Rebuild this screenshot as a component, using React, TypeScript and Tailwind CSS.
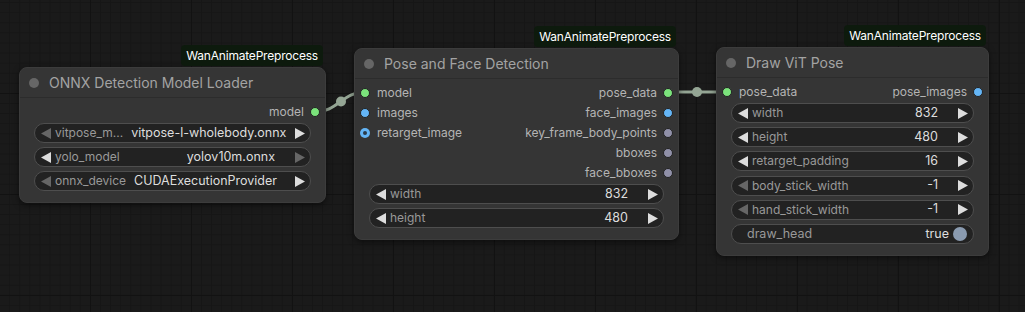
import React from 'react'

type Slot = { label: string; color: string; ring?: boolean }
type Widget =
  | { kind: 'combo'; label: string; value: string; left?: boolean; right?: boolean }
  | { kind: 'toggle'; label: string; value: string }

type NodeProps = {
  x: number
  y: number
  w: number
  title: string
  inputs: Slot[]
  outputs: Slot[]
  widgets: Widget[]
}

const GREEN = '#7be37b'
const BLUE = '#64b5f6'
const GRAY = '#9090a8'

function Dot({ slot }: { slot: Slot }) {
  if (slot.ring) {
    return (
      <span
        className="w-[10px] h-[10px] rounded-full shrink-0 flex items-center justify-center"
        style={{ backgroundColor: slot.color }}
      >
        <span className="w-[4px] h-[4px] rounded-full bg-[#2a3a4a]" />
      </span>
    )
  }
  return (
    <span
      className="w-[10px] h-[10px] rounded-full shrink-0 border border-[#222]"
      style={{ backgroundColor: slot.color }}
    />
  )
}

function Arrow({ dir, on }: { dir: 'l' | 'r'; on: boolean }) {
  return (
    <svg width="10" height="11" viewBox="0 0 10 11" className="shrink-0">
      <path d={dir === 'l' ? 'M10 0 L0 5.5 L10 11 Z' : 'M0 0 L10 5.5 L0 11 Z'} fill={on ? '#dddddd' : '#666666'} />
    </svg>
  )
}

function WidgetRow({ widget }: { widget: Widget }) {
  if (widget.kind === 'toggle') {
    return (
      <div className="h-5 rounded-full bg-[#222] border border-[#4e4e4e] flex items-center pl-[15px] pr-[6px] text-[12.5px]">
        <span className="text-[#999]">{widget.label}</span>
        <span className="ml-auto text-[#ddd] mr-[4px]">{widget.value}</span>
        <span className="w-[14px] h-[14px] rounded-full bg-[#8a9bb0]" />
      </div>
    )
  }
  return (
    <div className="h-5 rounded-full bg-[#222] border border-[#4e4e4e] flex items-center pl-[6px] pr-[5px] text-[12.5px]">
      <Arrow dir="l" on={widget.left !== false} />
      <span className="text-[#999] text-[12px] ml-[4px] whitespace-nowrap">{widget.label}</span>
      <span className="ml-auto text-[#ddd] whitespace-nowrap pl-2">{widget.value}</span>
      <span className="w-[20px]" />
      <Arrow dir="r" on={widget.right !== false} />
    </div>
  )
}

function Node({ x, y, w, title, inputs, outputs, widgets }: NodeProps) {
  const rows = Math.max(inputs.length, outputs.length)
  return (
    <div className="absolute" style={{ left: x, top: y, width: w }}>
      <div className="absolute right-[3px] -top-[22px] h-[21px] px-[5px] rounded-[4px] bg-[#0d1a0d] text-white text-[12px] leading-[21px] tracking-[-0.2px]">
        WanAnimatePreprocess
      </div>
      <div className="rounded-[8px] bg-[#353535] border border-[#3c3c3c] shadow-[0_2px_6px_rgba(0,0,0,0.5)] pb-[11px]">
        <div className="h-[30px] flex items-center border-b border-[#2c2c2c]">
          <span className="ml-[9px] w-[10px] h-[10px] rounded-full bg-[#666]" />
          <span className="ml-[10px] text-[14px] text-[#a3a3a3]">{title}</span>
        </div>
        <div className="pt-[4px]">
          {Array.from({ length: rows }).map((_, i) => (
            <div key={i} className="h-5 flex items-center justify-between px-[5px] text-[12px] text-[#b4b4b4]">
              <div className="flex items-center gap-[7px]">
                {inputs[i] && (
                  <>
                    <Dot slot={inputs[i]} />
                    <span>{inputs[i].label}</span>
                  </>
                )}
              </div>
              <div className="flex items-center gap-[6px]">
                {outputs[i] && (
                  <>
                    <span>{outputs[i].label}</span>
                    <Dot slot={outputs[i]} />
                  </>
                )}
              </div>
            </div>
          ))}
        </div>
        <div className="flex flex-col gap-[4.2px] mx-[14px] mt-[1px]">
          {widgets.map((wd, i) => (
            <WidgetRow key={i} widget={wd} />
          ))}
        </div>
      </div>
    </div>
  )
}

export default function App() {
  return (
    <div
      className="relative w-[1025px] h-[312px] overflow-hidden bg-[#1a1a1a] bg-[image:linear-gradient(to_right,#121212_1px,transparent_1px),linear-gradient(to_bottom,#121212_1px,transparent_1px),linear-gradient(to_right,#161616_1px,transparent_1px),linear-gradient(to_bottom,#161616_1px,transparent_1px)] bg-[size:101px_101px,101px_101px,10.1px_10.1px,10.1px_10.1px] bg-[position:-11px_-8px]"
      style={{ fontFamily: 'Inter, "Noto Sans", sans-serif' }}
    >
      <svg className="absolute inset-0" width="1025" height="312">
        <path d="M316 112 C 336 112, 344 92, 364 92" stroke="#94a594" strokeWidth="3" fill="none" />
        <circle cx="341" cy="101.5" r="5" fill="#94a594" />
        <path d="M669 92 L 726 92" stroke="#94a594" strokeWidth="3" fill="none" />
        <circle cx="697" cy="92" r="5" fill="#94a594" />
      </svg>

      <Node
        x={19}
        y={67}
        w={307}
        title="ONNX Detection Model Loader"
        inputs={[]}
        outputs={[{ label: 'model', color: GREEN }]}
        widgets={[
          { kind: 'combo', label: 'vitpose_m...', value: 'vitpose-l-wholebody.onnx', left: false },
          { kind: 'combo', label: 'yolo_model', value: 'yolov10m.onnx', right: false },
          { kind: 'combo', label: 'onnx_device', value: 'CUDAExecutionProvider', left: false },
        ]}
      />

      <Node
        x={354}
        y={48}
        w={325}
        title="Pose and Face Detection"
        inputs={[
          { label: 'model', color: GREEN },
          { label: 'images', color: BLUE },
          { label: 'retarget_image', color: BLUE, ring: true },
        ]}
        outputs={[
          { label: 'pose_data', color: GREEN },
          { label: 'face_images', color: BLUE },
          { label: 'key_frame_body_points', color: GRAY },
          { label: 'bboxes', color: GRAY },
          { label: 'face_bboxes', color: GRAY },
        ]}
        widgets={[
          { kind: 'combo', label: 'width', value: '832' },
          { kind: 'combo', label: 'height', value: '480' },
        ]}
      />

      <Node
        x={716}
        y={47}
        w={273}
        title="Draw ViT Pose"
        inputs={[{ label: 'pose_data', color: GREEN }]}
        outputs={[{ label: 'pose_images', color: BLUE }]}
        widgets={[
          { kind: 'combo', label: 'width', value: '832' },
          { kind: 'combo', label: 'height', value: '480' },
          { kind: 'combo', label: 'retarget_padding', value: '16' },
          { kind: 'combo', label: 'body_stick_width', value: '-1', left: false },
          { kind: 'combo', label: 'hand_stick_width', value: '-1', left: false },
          { kind: 'toggle', label: 'draw_head', value: 'true' },
        ]}
      />
    </div>
  )
}
